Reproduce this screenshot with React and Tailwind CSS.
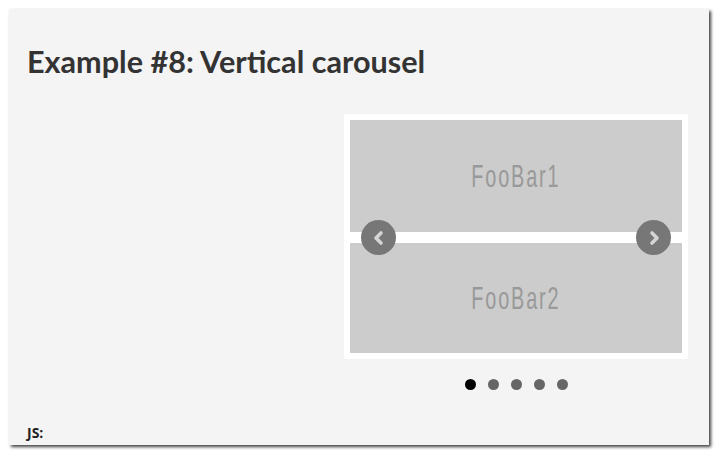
import React from "react";

function Chevron({ dir }) {
  return (
    <svg width="16" height="16" viewBox="0 0 16 16" className="block">
      {dir === "left" ? (
        <path d="M10 3 L5 8 L10 13" fill="none" stroke="#d4d4d4" strokeWidth="3.6" strokeLinecap="round" strokeLinejoin="round" />
      ) : (
        <path d="M6 3 L11 8 L6 13" fill="none" stroke="#d4d4d4" strokeWidth="3.6" strokeLinecap="round" strokeLinejoin="round" />
      )}
    </svg>
  );
}

function Slide({ label, h }) {
  return (
    <div className={`flex items-center justify-center bg-[#cccccc] ${h}`}>
      <span
        className="inline-block scale-x-[0.62] text-[32px] leading-none text-[#999999] tracking-[3px]"
        style={{ fontFamily: '"Liberation Sans", Arial, sans-serif' }}
      >
        {label}
      </span>
    </div>
  );
}

export default function App() {
  return (
    <div className="w-[720px] h-[458px] bg-white pt-[9px] pl-[9px]">
      <div
        className="w-[700px] h-[436px] bg-[#f4f4f4] shadow-[2px_2px_3px_rgba(0,0,0,0.75)] flex flex-col px-[18px]"
        style={{ fontFamily: 'Lato, "Open Sans", sans-serif' }}
      >
        <h2 className="mt-[35px] text-[30.6px] leading-[36px] font-bold text-[#333333]">
          Example #8: Vertical carousel
        </h2>
        <div className="flex justify-end pr-[3px] mt-[34px]">
          <div className="flex flex-col items-center">
            <div className="relative w-[344px] bg-white p-[6px] flex flex-col gap-[11px]">
              <Slide label="FooBar1" h="h-[112px]" />
              <Slide label="FooBar2" h="h-[110px]" />
              <div className="absolute left-[17px] top-[106px] w-[35px] h-[35px] rounded-full bg-[#777777] flex items-center justify-center">
                <Chevron dir="left" />
              </div>
              <div className="absolute right-[17px] top-[106px] w-[35px] h-[35px] rounded-full bg-[#777777] flex items-center justify-center">
                <Chevron dir="right" />
              </div>
            </div>
            <div className="flex gap-[12px] mt-[20px]">
              <span className="w-[11px] h-[11px] rounded-full bg-black" />
              <span className="w-[11px] h-[11px] rounded-full bg-[#666666]" />
              <span className="w-[11px] h-[11px] rounded-full bg-[#666666]" />
              <span className="w-[11px] h-[11px] rounded-full bg-[#666666]" />
              <span className="w-[11px] h-[11px] rounded-full bg-[#666666]" />
            </div>
          </div>
        </div>
        <div className="mt-auto mb-[4px] text-[14px] leading-[17px] font-bold text-[#222222]" style={{ fontFamily: '"Open Sans", sans-serif' }}>
          JS:
        </div>
      </div>
    </div>
  );
}
